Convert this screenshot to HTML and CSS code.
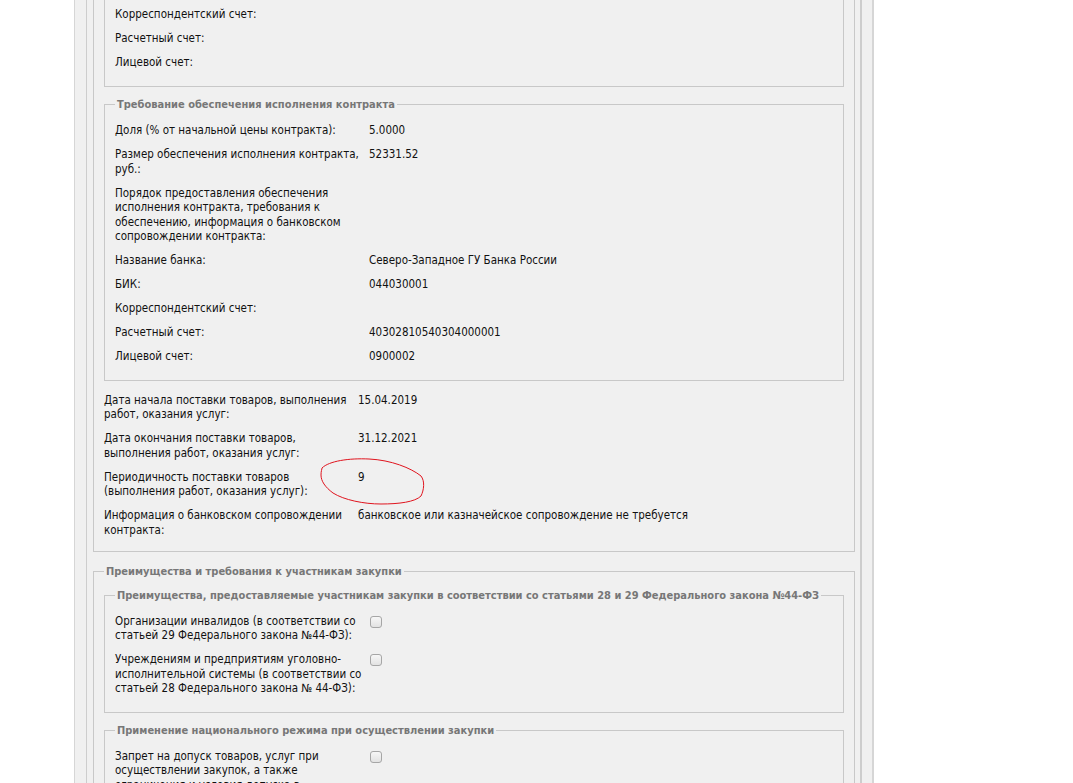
FILE: index.html
```html
<!DOCTYPE html>
<html>
	<head>
		<meta charset="UTF-8">
		<title>Извещение</title>
		<link rel="stylesheet" href="styles.css">
	</head>
	<body>
		<div class="page">
			<div class="content">
				<fieldset class="box cut">
					<fieldset class="sub cut">
						<div class="row"><div class="label">Корреспондентский счет:</div><div class="value"></div></div>
						<div class="row"><div class="label">Расчетный счет:</div><div class="value"></div></div>
						<div class="row"><div class="label">Лицевой счет:</div><div class="value"></div></div>
					</fieldset>
					<fieldset class="sub">
						<legend>Требование обеспечения исполнения контракта</legend>
						<div class="row"><div class="label">Доля (% от начальной цены контракта):</div><div class="value">5.0000</div></div>
						<div class="row"><div class="label">Размер обеспечения исполнения контракта,<br>руб.:</div><div class="value">52331.52</div></div>
						<div class="row"><div class="label">Порядок предоставления обеспечения<br>исполнения контракта, требования к<br>обеспечению, информация о банковском<br>сопровождении контракта:</div><div class="value"></div></div>
						<div class="row"><div class="label">Название банка:</div><div class="value">Северо-Западное ГУ Банка России</div></div>
						<div class="row"><div class="label">БИК:</div><div class="value">044030001</div></div>
						<div class="row"><div class="label">Корреспондентский счет:</div><div class="value"></div></div>
						<div class="row"><div class="label">Расчетный счет:</div><div class="value">40302810540304000001</div></div>
						<div class="row"><div class="label">Лицевой счет:</div><div class="value">0900002</div></div>
					</fieldset>
					<div class="rows">
						<div class="row"><div class="label">Дата начала поставки товаров, выполнения<br>работ, оказания услуг:</div><div class="value">15.04.2019</div></div>
						<div class="row"><div class="label">Дата окончания поставки товаров,<br>выполнения работ, оказания услуг:</div><div class="value">31.12.2021</div></div>
						<div class="row"><div class="label">Периодичность поставки товаров<br>(выполнения работ, оказания услуг):</div><div class="value">9</div></div>
						<div class="row"><div class="label">Информация о банковском сопровождении<br>контракта:</div><div class="value">банковское или казначейское сопровождение не требуется</div></div>
					</div>
				</fieldset>
				<fieldset class="box">
					<legend>Преимущества и требования к участникам закупки</legend>
					<fieldset class="sub">
						<legend>Преимущества, предоставляемые участникам закупки в соответствии со статьями 28 и 29 Федерального закона №44-ФЗ</legend>
						<div class="row"><div class="label">Организации инвалидов (в соответствии со<br>статьей 29 Федерального закона №44-ФЗ):</div><div class="value"><input type="checkbox" class="check" disabled></div></div>
						<div class="row"><div class="label">Учреждениям и предприятиям уголовно-<br>исполнительной системы (в соответствии со<br>статьей 28 Федерального закона № 44-ФЗ):</div><div class="value"><input type="checkbox" class="check" disabled></div></div>
					</fieldset>
					<fieldset class="sub">
						<legend>Применение национального режима при осуществлении закупки</legend>
						<div class="row"><div class="label">Запрет на допуск товаров, услуг при<br>осуществлении закупок, а также<br>ограничения и условия допуска в<br>соответствии со статьей 14 Федерального<br>закона № 44-ФЗ:</div><div class="value"><input type="checkbox" class="check" disabled></div></div>
					</fieldset>
				</fieldset>
			</div>
		</div>
		<svg class="mark" width="110" height="52" viewBox="0 0 110 52">
			<path d="M3 10 C10 3, 30 0, 50 1 C72 2, 92 10, 102 18 C106 23, 105 32, 102 38 C96 44, 80 46, 62 46 C45 46, 25 42, 14 35 C6 29, 2 23, 2 17 C2 13, 3 11, 3 10 Z" fill="none" stroke="#e0141e" stroke-width="1"/>
		</svg>
	</body>
</html>
```

FILE: styles.css
```css
html,body{
	margin: 0;
	padding: 0;
	background: #fff;
	overflow: hidden;
}
body{
	font-family: "DejaVu Sans Condensed", "DejaVu Sans", sans-serif;
	font-size: 11.5px;
	color: #111;
}
.page{
	box-sizing: border-box;
	width: 800px;
	min-height: 100vh;
	margin-left: 74px;
	padding: 0 10px 0 11px;
	background: #f0f0f0;
	border-left: 1px solid #d6d6d6;
	border-right: 2px solid #d6d6d6;
}
.content{
	min-height: 100vh;
	padding: 0 5px 0 6px;
	border-left: 1px solid #cdcdcd;
	border-right: 2px solid #cdcdcd;
}
fieldset{
	margin: 0;
	min-width: 0;
	border: 1px solid #c8c8c8;
}
legend{
	padding: 0 2px;
	line-height: 15px;
	font-size: 11px;
	font-weight: bold;
	color: #777;
}
.box{
	padding: 9px 10px 4px;
}
.box + .box{
	margin-top: 12px;
}
.sub{
	padding: 11px 10px 6.5px;
}
.sub + .sub{
	margin-top: 10px;
}
.cut{
	border-top: none;
	padding-top: 0;
}
.sub.cut{
	padding-top: 6.5px;
	padding-bottom: 7.5px;
}
.rows{
	padding-top: 12px;
}
.row{
	display: flex;
	line-height: 14.5px;
	padding-bottom: 9.5px;
}
.label{
	flex: none;
	width: 254px;
}
.value{
	flex: 1;
}
.check{
	-webkit-appearance: none;
	appearance: none;
	display: block;
	width: 12px;
	height: 12px;
	margin: 2px 0 0 1px;
	border: 1px solid #a6a6a6;
	border-radius: 3px;
	background: linear-gradient(#f7f7f7, #e2e2e2);
}
.mark{
	position: absolute;
	left: 319px;
	top: 458px;
}
```
